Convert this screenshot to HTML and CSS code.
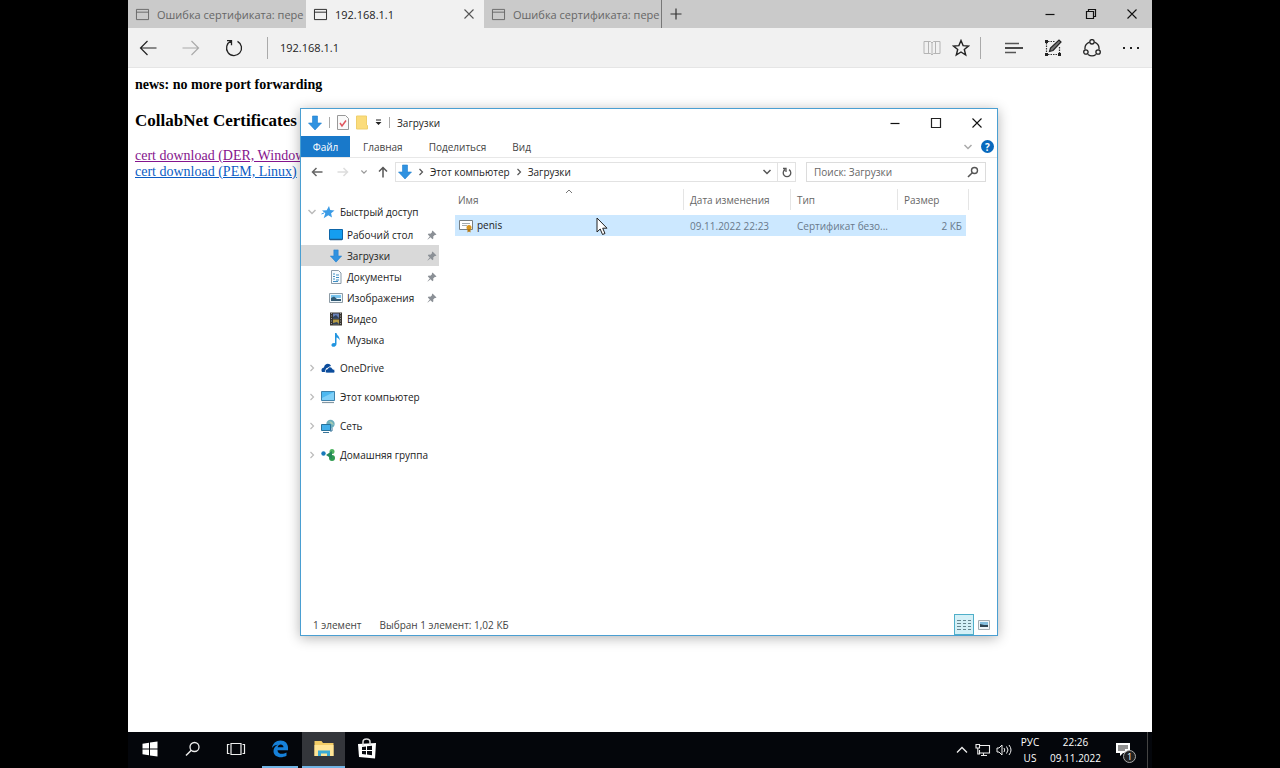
FILE: index.html
```html
<!DOCTYPE html>
<html lang="ru">
<head>
  <meta charset="UTF-8">
  <title>192.168.1.1</title>
  <link rel="stylesheet" href="styles.css">
</head>

<body>

  <!-- Shared icons -->
  <svg class="sprite" aria-hidden="true">
    <symbol id="i-page" viewBox="0 0 16 14"><path d="M1.5 1.5h13v11h-13zM1.5 4.5h13" fill="none" stroke="currentColor"/></symbol>
    <symbol id="i-close" viewBox="0 0 12 12"><path d="M1.5 1.5l9 9M10.5 1.5l-9 9" fill="none" stroke="currentColor" stroke-width="1.1"/></symbol>
    <symbol id="i-min" viewBox="0 0 12 12"><path d="M1.5 6.5h9" fill="none" stroke="currentColor" stroke-width="1.2"/></symbol>
    <symbol id="i-download" viewBox="0 0 14 16"><path d="M4.5 1h5v7H13.500L7 15 .5 8h4z" fill="#3092e0" stroke="#1f7fd0" stroke-width=".6"/></symbol>
    <symbol id="i-pin" viewBox="0 0 10 10"><path d="M5.500 .5l4 4-1 .6-.7-.1-1.600 1.600.2 1.700-.9.9-2-2L.8 9.500l-.3-.3 2.300-2.700-2-2 .9-.9 1.700.2L5 2.200l-.1-.7z" fill="#8b9096"/></symbol>
    <symbol id="i-down" viewBox="0 0 10 8"><path d="M1.500 2L5 5.500 8.500 2" fill="none" stroke="currentColor" stroke-width="1.500"/></symbol>
    <symbol id="i-right" viewBox="0 0 8 10"><path d="M2.500 2l3 3-3 3" fill="none" stroke="currentColor" stroke-width="1.200"/></symbol>
    <symbol id="i-back" viewBox="0 0 18 16"><path d="M17.500 8H1.500M8.500 1L1.500 8l7 7" fill="none" stroke="currentColor" stroke-width="1.200"/></symbol>
  </svg>

  <div class="desktop">

    <!-- Browser -->
    <div class="browser">
      <div class="tabs">
        <button class="tab"><svg class="tab-icon"><use href="#i-page"/></svg><span class="tab-title">Ошибка сертификата: пере</span></button>
        <div class="tab active">
          <svg class="tab-icon"><use href="#i-page"/></svg><span class="tab-title">192.168.1.1</span>
          <button class="tab-close" aria-label="Закрыть вкладку"><svg width="12" height="12"><use href="#i-close"/></svg></button>
        </div>
        <button class="tab last"><svg class="tab-icon"><use href="#i-page"/></svg><span class="tab-title">Ошибка сертификата: пере</span></button>
        <button class="tab-new" aria-label="Новая вкладка"><svg width="12" height="12" viewBox="0 0 12 12"><path d="M6 .5v11M.5 6h11" stroke="#333" stroke-width="1.2"/></svg></button>
        <div class="window-buttons">
          <button aria-label="Свернуть"><svg width="12" height="12"><use href="#i-min"/></svg></button>
          <button aria-label="Восстановить"><svg width="12" height="12" viewBox="0 0 12 12"><path d="M1.500 3.500h7v7h-7zM3.500 3V1.500h7v7H9" fill="none" stroke="#111" stroke-width="1.200"/></svg></button>
          <button aria-label="Закрыть"><svg width="12" height="12"><use href="#i-close"/></svg></button>
        </div>
      </div>

      <div class="toolbar">
        <button aria-label="Назад"><svg width="18" height="16"><use href="#i-back"/></svg></button>
        <button class="faded" aria-label="Вперед"><svg class="flip" width="18" height="16"><use href="#i-back"/></svg></button>
        <button aria-label="Обновить"><svg width="18" height="18" viewBox="0 0 18 18"><path d="M6 2.200A7.500 7.500 0 1 0 12.500 2.400M2 1.700h4.500v4.500" fill="none" stroke="#222" stroke-width="1.300"/></svg></button>
        <span class="divider"></span>
        <input class="address" type="text" value="192.168.1.1" aria-label="Адрес">
        <div class="toolbar-page">
          <button class="faded" aria-label="Режим чтения"><svg width="18" height="16" viewBox="0 0 18 16"><path d="M1 1.500h6.500L9 3l1.500-1.500H17v12h-6.500L9 15l-1.500-1.500H1zM9 3v12M5.500 2v11M12.500 2v11" fill="none" stroke="#b4b4b4"/></svg></button>
          <button aria-label="Избранное"><svg width="18" height="18" viewBox="0 0 18 18"><path d="M9 1.500l2.100 5.100 5.400.4-4.200 3.500 1.400 5.500L9 13l-4.700 3 1.400-5.500L1.500 7l5.400-.4z" fill="none" stroke="#222" stroke-width="1.400"/></svg></button>
        </div>
        <span class="divider"></span>
        <div class="toolbar-hub">
          <button aria-label="Центр"><svg width="18" height="14" viewBox="0 0 18 14"><path d="M0 2.500h14M0 11.500h11" stroke="#555" stroke-width="1.500"/><path d="M0 7h18" stroke="#111" stroke-width="1.500"/></svg></button>
          <button aria-label="Заметка"><svg width="18" height="18" viewBox="0 0 18 18"><path d="M2.500 4v11M4 15.500h10M15.500 8v6M4 2.500h7" stroke="#333" stroke-width="1.200" stroke-dasharray="1.500 1"/><path d="M1 1h3v3H1zM1 14h3v3H1zM14 14h3v3h-3z" fill="#222"/><path d="M5.500 12.500l1-3.500L15 1l2 2-8 8.500z" fill="#777" stroke="#222" stroke-width="1.200"/></svg></button>
          <button aria-label="Поделиться"><svg width="18" height="18" viewBox="0 0 18 18"><g fill="none" stroke="#222" stroke-width="1.300"><path d="M6.500 3.200A7 7 0 0 0 2 10.500M11.500 3.200A7 7 0 0 1 16 10.500M5 15.500a7 7 0 0 0 8 0"/><circle cx="9" cy="2.800" r="2.200"/><circle cx="2.900" cy="13" r="2.200"/><circle cx="15.100" cy="13" r="2.200"/></g></svg></button>
          <button aria-label="Дополнительно"><svg width="18" height="4" viewBox="0 0 18 4"><path d="M1 1h2v2H1zM8 1h2v2H8zM15 1h2v2h-2z" fill="#222"/></svg></button>
        </div>
      </div>

      <main class="page">
        <h4>news: no more port forwarding</h4>
        <h3>CollabNet Certificates</h3>
        <a class="visited" href="#der">cert download (DER, Windows)</a><br>
        <a href="#pem">cert download (PEM, Linux)</a>
      </main>
    </div>

    <!-- Explorer window -->
    <section class="explorer">
      <header class="titlebar">
        <svg width="14" height="16"><use href="#i-download"/></svg>
        <span class="divider"></span>
        <button aria-label="Свойства"><svg width="12" height="15" viewBox="0 0 12 15"><path d="M.5.500h8l3 3v11H.5z" fill="#fafafa" stroke="#999"/><path d="M3 8l2 3 4-5.500" fill="none" stroke="#e0555d" stroke-width="1.500"/></svg></button>
        <button aria-label="Новая папка"><svg width="12" height="15" viewBox="0 0 12 15"><path d="M.5 1h10v9l1 .5V14H.5z" fill="#fbdc7b" stroke="#efcf6c"/></svg></button>
        <button aria-label="Настройка панели"><svg width="7" height="7" viewBox="0 0 7 7"><path d="M1 .5h5v1H1zM.5 3h6l-3 3z" fill="#222"/></svg></button>
        <span class="divider"></span>
        <h1>Загрузки</h1>
        <div class="window-buttons">
          <button aria-label="Свернуть"><svg width="12" height="12"><use href="#i-min"/></svg></button>
          <button aria-label="Развернуть"><svg width="12" height="12" viewBox="0 0 12 12"><path d="M1.500 1.500h9v9h-9z" fill="none" stroke="#222" stroke-width="1.200"/></svg></button>
          <button aria-label="Закрыть"><svg width="12" height="12"><use href="#i-close"/></svg></button>
        </div>
      </header>

      <div class="ribbon">
        <button class="file">Файл</button>
        <button>Главная</button>
        <button>Поделиться</button>
        <button>Вид</button>
        <button class="ribbon-expand" aria-label="Развернуть ленту"><svg width="10" height="8"><use href="#i-down"/></svg></button>
        <button class="help" aria-label="Справка">?</button>
      </div>

      <div class="location">
        <button aria-label="Назад"><svg width="12" height="10" viewBox="0 0 12 10"><path d="M11.500 5h-10M5.500 1l-4 4 4 4" fill="none" stroke="#666" stroke-width="1.500"/></svg></button>
        <button class="forward" aria-label="Вперед"><svg class="flip" width="12" height="10" viewBox="0 0 12 10"><path d="M11.500 5h-10M5.500 1l-4 4 4 4" fill="none" stroke="#ddd" stroke-width="1.500"/></svg></button>
        <button class="history" aria-label="Последние расположения"><svg width="8" height="6"><use href="#i-down"/></svg></button>
        <button class="up" aria-label="Вверх"><svg width="10" height="12" viewBox="0 0 10 12"><path d="M5 11.500v-10M1 5.500l4-4 4 4" fill="none" stroke="#555" stroke-width="1.500"/></svg></button>
        <div class="path">
          <svg width="14" height="16"><use href="#i-download"/></svg>
          <svg width="8" height="10"><use href="#i-right"/></svg>
          <a href="#computer">Этот компьютер</a>
          <svg width="8" height="10"><use href="#i-right"/></svg>
          <a href="#downloads">Загрузки</a>
          <button class="path-menu" aria-label="Предыдущие расположения"><svg width="10" height="8"><use href="#i-down"/></svg></button>
          <button class="refresh" aria-label="Обновить"><svg width="10" height="11" viewBox="0 0 10 11"><path d="M7 2.600A3.800 3.800 0 1 1 3 2.600M1 1.500h3v3.500" fill="none" stroke="#555" stroke-width="1.300"/></svg></button>
        </div>
        <label class="search">
          <input type="search" placeholder="Поиск: Загрузки" aria-label="Поиск: Загрузки">
          <svg width="12" height="12" viewBox="0 0 12 12"><circle cx="7.500" cy="4.500" r="3" fill="none" stroke="#555" stroke-width="1.400"/><path d="M5.300 6.700L1 11" stroke="#555" stroke-width="1.600"/></svg>
        </label>
      </div>

      <div class="content">
        <nav class="tree">
          <a class="group" href="#quick"><svg class="caret" width="10" height="8"><use href="#i-down"/></svg><svg width="14" height="14" viewBox="0 0 14 14"><path d="M8 1l1.200 4 4.300.5-3.400 2.700.9 4.300L7.300 10.200l-4.600 3 1.600-5L1 5.500l4.700-.3z" fill="#3a9be6"/><path d="M.5 9l2.500-1" stroke="#3a9be6"/></svg>Быстрый доступ</a>
          <a class="item" href="#desk"><svg width="14" height="14" viewBox="0 0 14 14"><path d="M.5 1.500h13v10H.5z" fill="#159ef0" stroke="#0d65a8"/><path d="M1 11.500h12" stroke="#1d5b8d" stroke-width="1.500"/></svg>Рабочий стол<svg class="pin"><use href="#i-pin"/></svg></a>
          <a class="item selected" href="#downloads"><svg width="14" height="14"><use href="#i-download"/></svg>Загрузки<svg class="pin"><use href="#i-pin"/></svg></a>
          <a class="item" href="#docs"><svg width="14" height="14" viewBox="0 0 14 14"><path d="M2.500.5h7l2.500 2.500v10.500H2.500z" fill="#f7fbfe" stroke="#8a9aa8"/><path d="M4 4h2M7 5h3M4 6.500h2M7 7.500h3M4 9h2M7 10h3M4 11.500h5" stroke="#3f8fc4"/></svg>Документы<svg class="pin"><use href="#i-pin"/></svg></a>
          <a class="item" href="#images"><svg width="14" height="14" viewBox="0 0 14 14"><path d="M.5 2.500h13v9H.5z" fill="#eef7fc" stroke="#8d9ba5"/><path d="M2 4h10v3H2z" fill="#79c4ee"/><path d="M2 7l3-1.500L8 8h4v2H2z" fill="#335b74"/></svg>Изображения<svg class="pin"><use href="#i-pin"/></svg></a>
          <a class="item" href="#video"><svg width="14" height="14" viewBox="0 0 14 14"><path d="M1 .5h12v13H1z" fill="#38352f"/><path d="M4 1.500h6v5H4z" fill="#6b82b8"/><path d="M4 7.500h6v5H4z" fill="#b59b46"/><path d="M4 5l3-2 3 3v.5H4zM4 11l4-1 2 2v.5H4z" fill="#31445c"/><path d="M2.500 1v12M11.500 1v12" stroke="#999" stroke-dasharray="1 1.500"/></svg>Видео</a>
          <a class="item" href="#music"><svg width="14" height="14" viewBox="0 0 14 14"><path d="M6 0h1.500c.3 2.500 3.800 3.500 3 7.500-.5-1.800-1.500-2.700-3-3v6.500c0 3-4.500 3.800-5 1.500-.4-1.800 1.700-3 3.500-2.300z" fill="#2295e0"/></svg>Музыка</a>
          <a class="group" href="#onedrive"><svg class="caret" width="8" height="10"><use href="#i-right"/></svg><svg width="14" height="14" viewBox="0 0 14 14"><path d="M1 11C-.5 8 1.500 6.500 3 6.500c.5-4 5.500-5 7-1.500L5 7.500 4 11z" fill="#0b4c9c"/><path d="M5 12C3.500 9.500 5 8 6.500 8 7.500 5 11 5.500 11.500 8c2.500.3 3 3 1.500 4z" fill="#0b4c9c" stroke="#fff" stroke-width=".7"/></svg>OneDrive</a>
          <a class="group" href="#computer"><svg class="caret" width="8" height="10"><use href="#i-right"/></svg><svg width="14" height="14" viewBox="0 0 14 14"><path d="M.5 1.500h13v9H.5z" fill="#4db9f1" stroke="#3f82ab"/><path d="M1 8l12-6v8H1z" fill="#80d0f8"/><path d="M1 12.500h12" stroke="#8497a3" stroke-width="1.200"/></svg>Этот компьютер</a>
          <a class="group" href="#network"><svg class="caret" width="8" height="10"><use href="#i-right"/></svg><svg width="14" height="14" viewBox="0 0 14 14"><circle cx="9.500" cy="5" r="4.200" fill="#6caebc"/><path d="M8 2l3 1 2 3-3-1z" fill="#a7cbb2"/><path d="M.5 5.500h9v6h-9z" fill="#42afe9" stroke="#28739b"/><path d="M2 13.500h6M11 9v3H9" stroke="#39759a" fill="none"/></svg>Сеть</a>
          <a class="group" href="#home"><svg class="caret" width="8" height="10"><use href="#i-right"/></svg><svg width="14" height="14" viewBox="0 0 14 14"><circle cx="2.500" cy="5.500" r="2.200" fill="#1879ba"/><circle cx="11" cy="3.500" r="2.500" fill="#4fb461"/><circle cx="11" cy="10" r="3" fill="#2f9b51"/><path d="M5 7l6-4v8z" fill="#25895a"/></svg>Домашняя группа</a>
        </nav>

        <div class="files">
          <table>
            <thead>
              <tr>
                <th class="name">Имя<svg class="sort" width="8" height="5" viewBox="0 0 8 5"><path d="M1 4l3-3 3 3" fill="none" stroke="#777"/></svg></th>
                <th class="date">Дата изменения</th>
                <th class="type">Тип</th>
                <th class="size">Размер</th>
              </tr>
            </thead>
            <tbody>
              <tr>
                <td class="name"><svg width="15" height="14" viewBox="0 0 15 14"><path d="M.5 1.500h13v9H.5z" fill="#fff" stroke="#777f83"/><path d="M3 4.500h8M3 6.500h5" stroke="#a4abae"/><circle cx="10" cy="8.500" r="2.500" fill="#d8951e"/><path d="M8.500 10v3.500l1.500-1 1.500 1V10z" fill="#b57712"/></svg>penis</td>
                <td>09.11.2022 22:23</td>
                <td>Сертификат безо...</td>
                <td class="size">2 КБ</td>
              </tr>
            </tbody>
          </table>
        </div>
      </div>

      <footer class="status">
        <span>1 элемент</span>
        <span>Выбран 1 элемент: 1,02 КБ</span>
        <div class="views">
          <button class="active" aria-label="Таблица"><svg width="16" height="14" viewBox="0 0 16 14"><path d="M1 2.500h4M1 5.500h4M1 8.500h4M1 11.500h4M7 2.500h3M7 5.500h3M7 8.500h3M7 11.500h3M12 2.500h3M12 5.500h3M12 8.500h3M12 11.500h3" stroke="#66858e"/></svg></button>
          <button aria-label="Крупные значки"><svg width="12" height="10" viewBox="0 0 12 10"><path d="M.5.500h11v9H.5z" fill="#eef5f8" stroke="#a5adb1"/><path d="M2 2h8v3H2z" fill="#83bddc"/><path d="M2 4l4 1h4v2H2z" fill="#2e4552"/></svg></button>
        </div>
      </footer>
    </section>

    <!-- Taskbar -->
    <footer class="taskbar">
      <button aria-label="Пуск"><svg width="16" height="16" viewBox="0 0 16 16"><path d="M.5 2.700l6.500-1v5.800H.5zM8 1.500l7.500-1v7H8zM.5 8.500H7v5.800l-6.500-1zM8 8.500h7.500v7l-7.500-1z" fill="#fff"/></svg></button>
      <button aria-label="Поиск"><svg width="16" height="16" viewBox="0 0 16 16"><circle cx="9.500" cy="6" r="4.500" fill="none" stroke="#eee" stroke-width="1.300"/><path d="M6.300 9.300L1 14.500" stroke="#eee" stroke-width="1.500"/></svg></button>
      <button aria-label="Представление задач"><svg width="20" height="14" viewBox="0 0 20 14"><path d="M5 1.500h10v11H5zM3.500 2.500h-2v9h2M16.500 2.500h2v9h-2" fill="none" stroke="#eee" stroke-width="1.200"/></svg></button>
      <button class="open" aria-label="Edge"><svg width="18" height="18" viewBox="0 0 18 18"><path d="M1 8C1.500 3.500 5 .5 9.500.5c5 0 7.800 3.500 7.500 8v1.700H6.500c.3 4.300 5.500 4.300 9 2.300v3.300C9.500 19 2.500 16.800 2.500 11c0-3 1.800-5 4.500-6.300C4.500 4.800 2.500 5.800 1 8zM6.700 7.200h5.800c-.1-3.800-5.400-3.700-5.800 0z" fill="#1680d9"/></svg></button>
      <button class="open current" aria-label="Проводник"><svg width="20" height="18" viewBox="0 0 20 18"><path d="M.5 1h7l1.500 2h10.500v13H.5z" fill="#f2cc66"/><path d="M.5 5h19v11H.5z" fill="#ffe597"/><path d="M4 16v-5.500h12V16h-3v-2.500H7V16z" fill="#3baad5"/></svg></button>
      <button aria-label="Магазин"><svg width="20" height="22" viewBox="0 0 20 22"><path d="M1 6l18-1-1 15.500L2 19z" fill="#fff"/><path d="M6 8V4c0-4 7-4 7 0v3" fill="none" stroke="#ddd" stroke-width="1.500"/><path d="M5 9l4-.5V12H5zM10 8.300l5-.5V12h-5zM5 13h4v3.500L5 16zM10 13h5v4.200l-5-.6z" fill="#090b10"/></svg></button>

      <div class="tray">
        <button aria-label="Скрытые значки"><svg width="12" height="8" viewBox="0 0 12 8"><path d="M1 6.500l5-5 5 5" fill="none" stroke="#eee" stroke-width="1.300"/></svg></button>
        <button aria-label="Сеть"><svg width="16" height="14" viewBox="0 0 16 14"><path d="M5 2.500h9.500v7.500H4.500V7M8.500 10v2.500M6 12.500h6M1 1.500h3.500V5H1zM2.800 5v6H5" fill="none" stroke="#eee" stroke-width="1.100"/></svg></button>
        <button aria-label="Громкость"><svg width="16" height="14" viewBox="0 0 16 14"><path d="M1 5h2l3-3v10L3 9H1zM8 5q1.500 2 0 4M10.500 3.500q3 3.500 0 7M13 2q4 5 0 10" fill="none" stroke="#eee"/></svg></button>
        <button class="lang">РУС<br>US</button>
        <button class="clock">22:26<br>09.11.2022</button>
        <button class="notify" aria-label="Центр уведомлений"><svg width="16" height="16" viewBox="0 0 16 16"><path d="M1 1h14v10H8l-3 3v-3H1z" fill="#fff"/><path d="M3 4h10M3 6h10M3 8h7" stroke="#222"/></svg><span class="badge">1</span></button>
      </div>
    </footer>

    <svg class="cursor" width="12" height="19" viewBox="0 0 12 19"><path d="M1 1v14l3.200-3L6.500 17.500l2.500-1-2.300-5.300H11z" fill="#fff" stroke="#222"/></svg>
  </div>

</body>
</html>
```

FILE: styles.css
```css
:root {
  --accent: #1979ca;
  --tab-gray: #cacaca;
  --toolbar-gray: #f1f1f1;
  --select-blue: #cce8ff;
}

* {
  box-sizing: border-box;
}

body {
  margin: 0;
  background-color: #000;
  font-family: 'Open Sans', 'Noto Sans', sans-serif;
  font-size: 11px;
  color: #222;
}

button {
  display: flex;
  align-items: center;
  justify-content: center;
  padding: 0;
  border: none;
  background: none;
  font: inherit;
  color: inherit;
}

svg {
  flex: none;
}

a {
  color: inherit;
  text-decoration: none;
}

.sprite {
  position: absolute;
  width: 0;
  height: 0;
}

.flip {
  transform: scaleX(-1);
}

.desktop {
  position: relative;
  display: flex;
  flex-direction: column;
  height: 100vh;
  margin: 0 10%;
  overflow: hidden;
}

/* Browser */
.browser {
  flex: 1;
  background-color: #fff;
}

.tabs {
  display: flex;
  height: 28px;
  background-color: var(--tab-gray);
}

.tab {
  display: flex;
  align-items: center;
  justify-content: flex-start;
  width: 178px;
  padding: 0 0 0 7px;
  gap: 7px;
  color: #666;
}

.tab.active {
  padding-right: 9px;
  background-color: var(--toolbar-gray);
  color: #222;
}

.tab.last {
  border-right: 1px solid #777;
}

.tab-icon {
  width: 15px;
  height: 13px;
}

.tab-title {
  flex: 1;
  white-space: nowrap;
  text-align: left;
}

.tab-close {
  color: #555;
}

.tab-new {
  width: 28px;
}

.window-buttons {
  display: flex;
  margin-left: auto;
  color: #111;
}

.window-buttons button {
  width: 41px;
}

.toolbar {
  display: flex;
  align-items: center;
  height: 40px;
  padding-left: 10px;
  background-color: var(--toolbar-gray);
  border-bottom: 1px solid #e5e5e5;
}

.toolbar > button {
  width: 20px;
  margin-right: 23px;
}

.toolbar .faded {
  color: #aaa;
}

.divider {
  width: 1px;
  height: 22px;
  background-color: #aaa;
}

.address {
  flex: 1;
  min-width: 0;
  padding: 0 12px;
  border: none;
  background: none;
  font: inherit;
  color: #222;
}

.toolbar-page {
  display: flex;
  gap: 11px;
  padding-right: 10px;
}

.toolbar-hub {
  display: flex;
  gap: 21px;
  padding: 0 12px 0 24px;
}

.page {
  padding: 8px 7px;
  font-family: 'Liberation Serif', serif;
  font-size: 14px;
  line-height: 16px;
  color: #000;
}

.page h4 {
  margin: 0 0 18px;
  font-size: 14px;
  line-height: 18px;
}

.page h3 {
  margin: 0 0 18px;
  font-size: 17px;
  line-height: 18px;
}

.page a {
  color: #0b5cc4;
  text-decoration: underline;
}

.page .visited {
  color: #85148d;
}

/* Explorer */
.explorer {
  position: absolute;
  top: 108px;
  right: 154px;
  bottom: 132px;
  left: 172px;
  display: flex;
  flex-direction: column;
  background-color: #fff;
  border: 1px solid #4a9fd2;
  box-shadow: 0 2px 12px rgba(0, 0, 0, 0.3);
  font-size: 10px;
}

.titlebar {
  display: flex;
  align-items: center;
  height: 27px;
  padding-left: 7px;
  gap: 7px;
}

.titlebar .divider {
  height: 11px;
}

.titlebar h1 {
  margin: 0;
  font-size: 10px;
  font-weight: 400;
}

.ribbon {
  display: flex;
  height: 22px;
  padding-right: 3px;
  border-bottom: 1px solid #e8e8e8;
  color: #444;
}

.ribbon button {
  padding: 0 13px;
}

.ribbon .file {
  width: 49px;
  background-color: var(--accent);
  color: #fff;
}

.ribbon .ribbon-expand {
  margin-left: auto;
  padding: 0 8px;
  color: #aaa;
}

.ribbon .help {
  align-self: center;
  width: 13px;
  height: 13px;
  padding: 0;
  border-radius: 50%;
  background-color: #0869bd;
  font-weight: 700;
  color: #fff;
}

.location {
  display: flex;
  align-items: center;
  height: 28px;
  padding: 0 11px 0 10px;
}

.location > button {
  width: 12px;
  margin-right: 14px;
}

.location .forward {
  margin-right: 11px;
}

.location .history {
  width: 8px;
  margin-right: 9px;
  color: #999;
}

.location .up {
  margin-right: 6px;
}

.path {
  display: flex;
  flex: 1;
  align-items: center;
  height: 20px;
  padding-left: 2px;
  gap: 5px;
  border: 1px solid #e2e2e2;
  color: #222;
}

.path svg {
  color: #555;
}

.path-menu {
  margin-left: auto;
}

.refresh {
  width: 18px;
  height: 18px;
  border-left: 1px solid #e2e2e2;
}

.search {
  display: flex;
  align-items: center;
  width: 180px;
  height: 20px;
  margin-left: 10px;
  padding: 0 6px 0 7px;
  border: 1px solid #dcdcdc;
}

.search input {
  flex: 1;
  min-width: 0;
  padding: 0;
  border: none;
  font: inherit;
}

.search input::placeholder {
  color: #666;
}

.content {
  display: flex;
  flex: 1;
  min-height: 0;
}

.tree {
  width: 138px;
  padding-top: 15px;
}

.tree a {
  display: flex;
  align-items: center;
  white-space: nowrap;
}

.tree .group {
  height: 22px;
  margin-bottom: 7px;
  padding-left: 5px;
  gap: 5px;
}

.tree .group:first-child {
  margin-bottom: 1px;
}

.tree .item {
  height: 21px;
  padding: 0 2px 0 28px;
  gap: 4px;
}

.tree .item + .group {
  margin-top: 7px;
}

.tree .selected {
  background-color: #d9d9d9;
}

.caret {
  width: 12px;
  margin-right: -2px;
  color: #bbb;
}

.pin {
  width: 10px;
  height: 10px;
  margin-left: auto;
}

.files {
  flex: 1;
  padding: 3px 28px 0 16px;
}

table {
  width: 100%;
  border-spacing: 0;
  table-layout: fixed;
}

th {
  position: relative;
  height: 21px;
  padding: 0 6px;
  border-right: 1px solid #e5e5e5;
  font-weight: 400;
  text-align: left;
  color: #666;
}

th.name {
  padding-left: 3px;
}

th.date,
th.type {
  width: 107px;
}

th.size {
  width: 71px;
}

.sort {
  position: absolute;
  top: 0;
  left: calc(50% - 4px);
}

tbody::before {
  content: '';
  display: block;
  height: 5px;
}

td {
  height: 21px;
  padding: 0 6px;
  background-color: var(--select-blue);
  background-clip: padding-box;
  white-space: nowrap;
  color: #68788a;
}

td.name {
  padding-left: 4px;
  color: #222;
}

td.name svg {
  margin-right: 3px;
  vertical-align: middle;
}

td.size {
  padding-right: 4px;
  border-right: 3px solid transparent;
  text-align: right;
}

.status {
  display: flex;
  align-items: center;
  height: 21px;
  padding: 0 3px 0 12px;
  gap: 18px;
  color: #444;
}

.views {
  display: flex;
  margin-left: auto;
}

.views button {
  width: 20px;
  height: 21px;
}

.views .active {
  background-color: #d4f0f7;
  border: 1px solid #4fafc9;
}

/* Taskbar */
.taskbar {
  display: flex;
  height: 36px;
  background-color: #04060b;
  font-size: 10px;
  color: #fff;
}

.taskbar > button {
  width: 43px;
  border-bottom: 2px solid transparent;
}

.taskbar .open {
  width: 36px;
  margin: 0 4px 0 5px;
  border-color: #71b4e5;
}

.taskbar .current {
  width: 43px;
  margin: 0;
  background-color: #34363b;
}

.tray {
  display: flex;
  margin-left: auto;
  padding-right: 4px;
}

.tray button {
  width: 21px;
}

.tray .lang {
  width: 32px;
  line-height: 16px;
}

.tray .clock {
  width: 59px;
  line-height: 16px;
}

.tray .notify {
  position: relative;
  width: 43px;
  padding-right: 6px;
  border-right: 1px solid #444;
}

.badge {
  position: absolute;
  right: 11px;
  bottom: 5px;
  width: 13px;
  height: 13px;
  border: 1px solid #aaa;
  border-radius: 50%;
  background-color: #222;
  font-size: 9px;
  line-height: 11px;
}

.cursor {
  position: absolute;
  top: 217px;
  left: 468px;
}
```
